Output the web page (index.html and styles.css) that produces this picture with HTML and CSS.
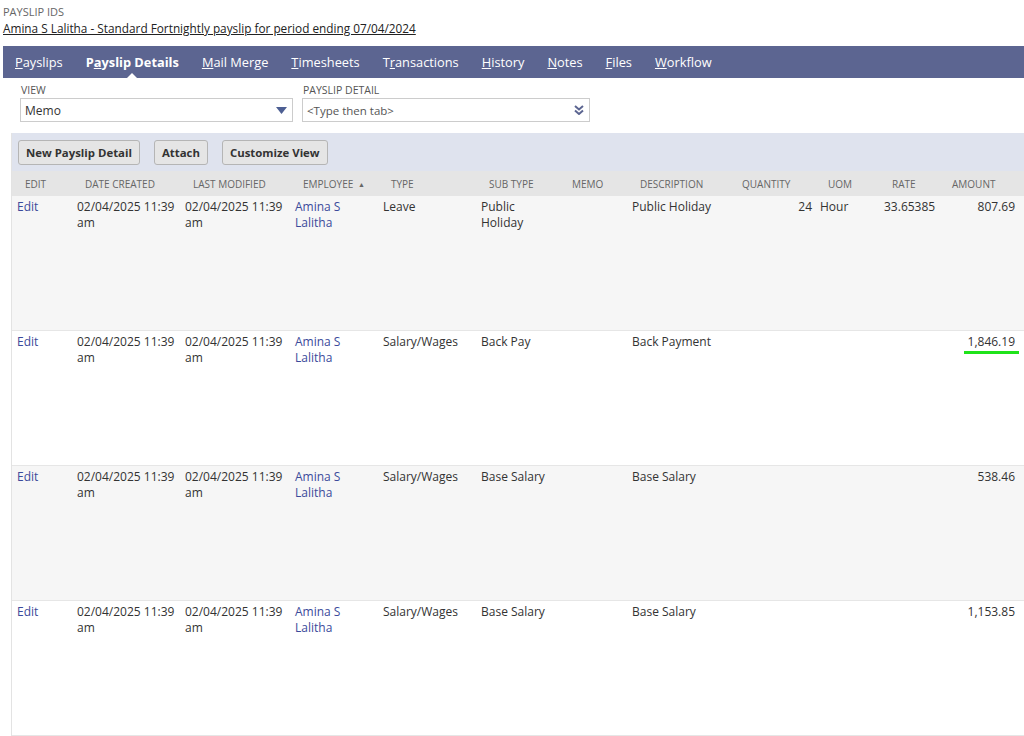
FILE: index.html
```html
<!DOCTYPE html>
<html lang="en">
<head>
  <meta charset="UTF-8">
  <title>Payslip Details</title>
  <link rel="stylesheet" href="styles.css">
</head>
<body>
  <div class="record-head">
    <div class="field-label">PAYSLIP IDS</div>
    <a class="record-link" href="#">Amina S Lalitha - Standard Fortnightly payslip for period ending 07/04/2024</a>
  </div>

  <nav class="tabs">
    <a href="#"><u>P</u>ayslips</a>
    <a href="#" class="active">P<u>a</u>yslip Details</a>
    <a href="#"><u>M</u>ail Merge</a>
    <a href="#"><u>T</u>imesheets</a>
    <a href="#">T<u>r</u>ansactions</a>
    <a href="#"><u>H</u>istory</a>
    <a href="#"><u>N</u>otes</a>
    <a href="#"><u>F</u>iles</a>
    <a href="#"><u>W</u>orkflow</a>
  </nav>

  <div class="filters">
    <div class="filter filter-view">
      <div class="filter-label">VIEW</div>
      <div class="select">
        <span>Memo</span>
        <svg width="11" height="7" viewBox="0 0 11 7"><path d="M0 0 H11 L5.5 7 Z" fill="#4d5f93"/></svg>
      </div>
    </div>
    <div class="filter filter-detail">
      <div class="filter-label">PAYSLIP DETAIL</div>
      <div class="select">
        <span class="placeholder">&lt;Type then tab&gt;</span>
        <svg width="10" height="10" viewBox="0 0 10 10"><path d="M1 1 L5 4.5 L9 1 M1 5.5 L5 9 L9 5.5" fill="none" stroke="#5c6591" stroke-width="2"/></svg>
      </div>
    </div>
  </div>

  <div class="sublist">
    <div class="toolbar">
      <button>New Payslip Detail</button>
      <button>Attach</button>
      <button>Customize View</button>
    </div>
    <table>
      <colgroup>
        <col style="width:60px"><col style="width:108px"><col style="width:110px"><col style="width:88px">
        <col style="width:98px"><col style="width:83px"><col style="width:68px"><col style="width:102px">
        <col style="width:86px"><col style="width:64px"><col style="width:60px"><col style="width:85px">
      </colgroup>
      <thead>
        <tr>
          <th>EDIT</th>
          <th>DATE CREATED</th>
          <th>LAST MODIFIED</th>
          <th>EMPLOYEE <span class="sort">&#9650;</span></th>
          <th>TYPE</th>
          <th>SUB TYPE</th>
          <th>MEMO</th>
          <th>DESCRIPTION</th>
          <th>QUANTITY</th>
          <th>UOM</th>
          <th>RATE</th>
          <th>AMOUNT</th>
        </tr>
      </thead>
      <tbody>
        <tr>
          <td><a href="#">Edit</a></td>
          <td>02/04/2025 11:39 am</td>
          <td>02/04/2025 11:39 am</td>
          <td><a href="#">Amina S Lalitha</a></td>
          <td>Leave</td>
          <td>Public Holiday</td>
          <td></td>
          <td>Public Holiday</td>
          <td class="num">24</td>
          <td>Hour</td>
          <td>33.65385</td>
          <td class="num amount">807.69</td>
        </tr>
        <tr>
          <td><a href="#">Edit</a></td>
          <td>02/04/2025 11:39 am</td>
          <td>02/04/2025 11:39 am</td>
          <td><a href="#">Amina S Lalitha</a></td>
          <td>Salary/Wages</td>
          <td>Back Pay</td>
          <td></td>
          <td>Back Payment</td>
          <td class="num"></td>
          <td></td>
          <td></td>
          <td class="num amount"><span class="marked">1,846.19</span></td>
        </tr>
        <tr>
          <td><a href="#">Edit</a></td>
          <td>02/04/2025 11:39 am</td>
          <td>02/04/2025 11:39 am</td>
          <td><a href="#">Amina S Lalitha</a></td>
          <td>Salary/Wages</td>
          <td>Base Salary</td>
          <td></td>
          <td>Base Salary</td>
          <td class="num"></td>
          <td></td>
          <td></td>
          <td class="num amount">538.46</td>
        </tr>
        <tr>
          <td><a href="#">Edit</a></td>
          <td>02/04/2025 11:39 am</td>
          <td>02/04/2025 11:39 am</td>
          <td><a href="#">Amina S Lalitha</a></td>
          <td>Salary/Wages</td>
          <td>Base Salary</td>
          <td></td>
          <td>Base Salary</td>
          <td class="num"></td>
          <td></td>
          <td></td>
          <td class="num amount">1,153.85</td>
        </tr>
      </tbody>
    </table>
  </div>
</body>
</html>
```

FILE: styles.css
```css
body {
  margin: 0;
  font-family: "Open Sans", Arial, sans-serif;
  font-size: 12px;
  color: #333;
  background: #fff;
}
a {
  color: #3b4a9b;
  text-decoration: none;
}
.record-head {
  padding: 4px 3px 0;
  line-height: 16px;
}
.field-label {
  font-size: 11px;
  color: #666;
}
.record-link {
  color: #222;
  font-size: 11.8px;
  text-decoration: underline;
}
.tabs {
  margin: 9px 0 0 3px;
  height: 32px;
  background-color: #5c6591;
  display: flex;
  align-items: center;
  padding-left: 12px;
  gap: 23px;
}
.tabs a {
  position: relative;
  color: #fff;
  font-size: 12.8px;
  line-height: 32px;
}
.tabs a.active {
  font-weight: bold;
}
.tabs a.active::after {
  content: "";
  position: absolute;
  left: 50%;
  bottom: 0;
  margin-left: -5px;
  border-left: 5px solid transparent;
  border-right: 5px solid transparent;
  border-bottom: 5px solid #fff;
}
.filters {
  display: flex;
  padding: 5px 0 0 20px;
  gap: 9px;
}
.filter-label {
  font-size: 10.5px;
  line-height: 14px;
  color: #555;
  padding-left: 1px;
}
.select {
  margin-top: 1px;
  height: 24px;
  box-sizing: border-box;
  border: 1px solid #ccc;
  display: flex;
  align-items: center;
  justify-content: space-between;
  padding: 0 5px 0 4px;
}
.filter-view .select {
  width: 273px;
}
.filter-detail .select {
  width: 288px;
}
.placeholder {
  color: #555;
  font-size: 11.5px;
}
.sublist {
  margin: 11px 0 0 11px;
  border-left: 1px solid #e3e3e3;
}
.toolbar {
  height: 38px;
  background-color: #dfe3ee;
  display: flex;
  align-items: center;
  padding-left: 6px;
  gap: 14px;
}
.toolbar button {
  height: 25px;
  font-family: inherit;
  font-size: 11.4px;
  font-weight: bold;
  color: #333;
  background: #e5e5e5;
  border: 1px solid #b5b5b5;
  border-radius: 3px;
  padding: 0 7px;
}
table {
  width: 1012px;
  border-collapse: collapse;
  table-layout: fixed;
}
th {
  height: 25px;
  background-color: #e5e5e5;
  font-size: 10px;
  font-weight: normal;
  color: #666;
  text-align: left;
  padding: 0 0 0 13px;
  white-space: nowrap;
}
.sort {
  font-size: 7px;
  vertical-align: 1px;
  margin-left: 2px;
}
td {
  height: 131px;
  vertical-align: top;
  padding: 3px 3px 0 5px;
  line-height: 16px;
  border-bottom: 1px solid #e6e6e6;
}
tbody tr:nth-child(odd) {
  background-color: #f6f6f6;
}
td.num {
  text-align: right;
}
td.amount {
  padding-right: 9px;
}
.marked {
  position: relative;
}
.marked::after {
  content: "";
  position: absolute;
  left: -4px;
  right: -4px;
  bottom: -4px;
  height: 3px;
  background: #1fe31a;
}
```
